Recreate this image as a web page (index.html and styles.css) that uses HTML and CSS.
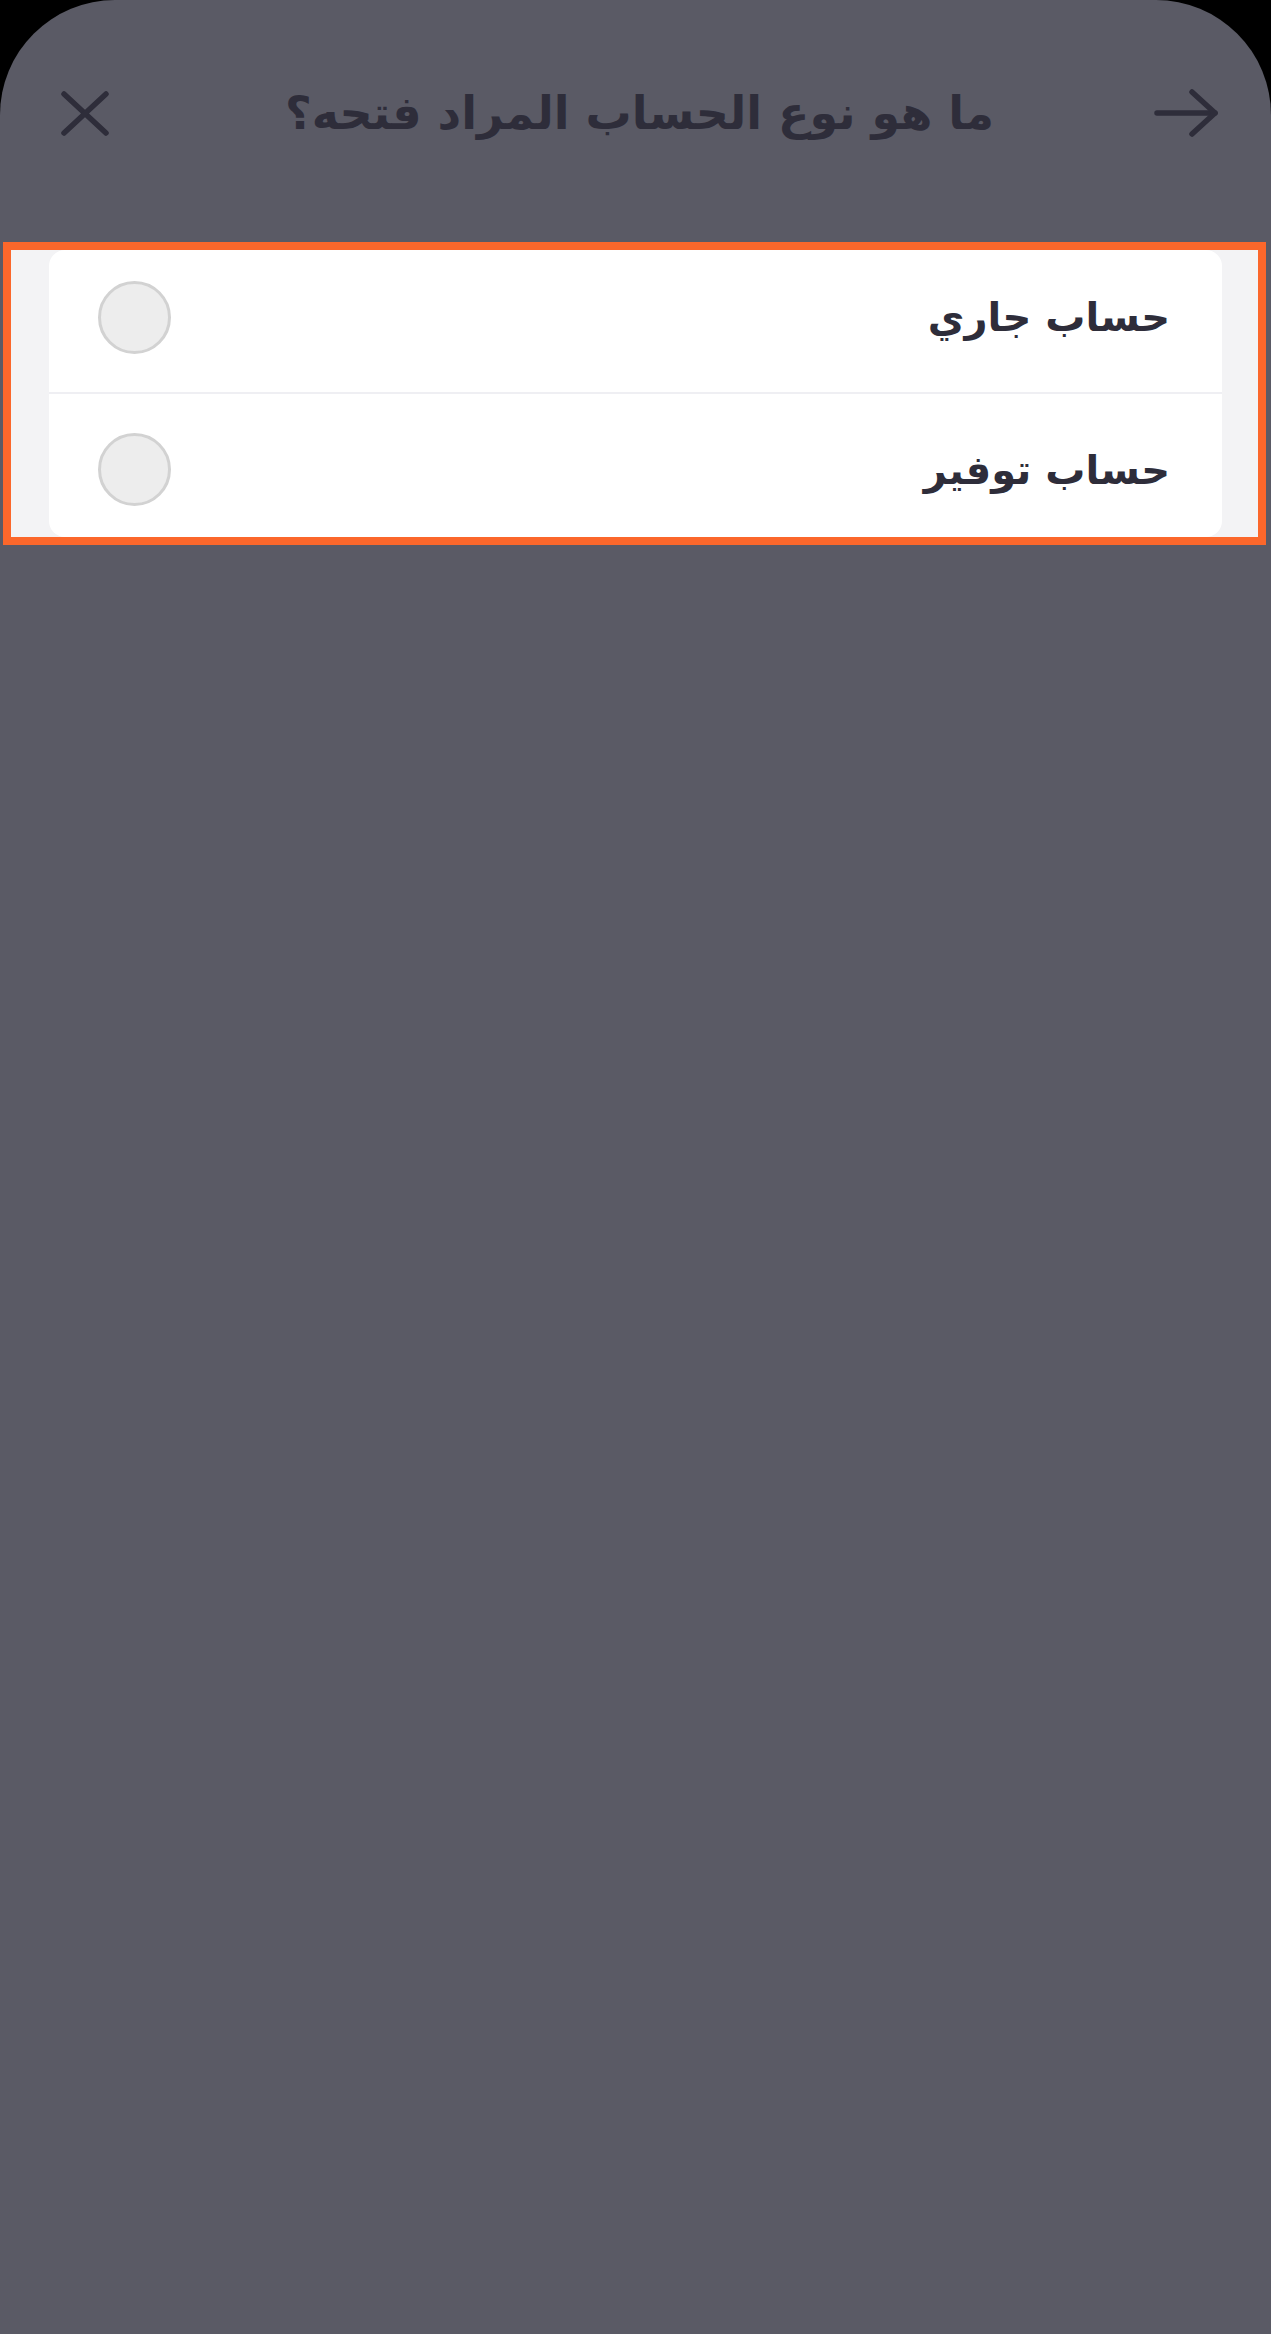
FILE: index.html
```html
<!DOCTYPE html>
<html lang="ar" dir="rtl">
<head>
<meta charset="utf-8">
<title>نوع الحساب</title>
<link rel="stylesheet" href="styles.css">
</head>
<body>
<div class="sheet">
  <header class="topbar">
    <button class="icon-btn back" aria-label="رجوع">
      <svg width="64" height="48" viewBox="0 0 64 48" fill="none" stroke="#2e2d3a" stroke-width="5.5" stroke-linecap="round" stroke-linejoin="round">
        <path d="M3 24 H61"/>
        <path d="M38 3 L61 24 L38 45"/>
      </svg>
    </button>
    <h1 class="title">ما هو نوع الحساب المراد فتحه؟</h1>
    <button class="icon-btn close" aria-label="إغلاق">
      <svg width="48" height="48" viewBox="0 0 48 48" fill="none" stroke="#2e2d3a" stroke-width="5.5" stroke-linecap="round">
        <path d="M3 5 L45 44"/>
        <path d="M45 5 L3 44"/>
      </svg>
    </button>
  </header>

  <section class="highlight">
    <div class="card">
      <label class="row row-first">
        <span class="label">حساب جاري</span>
        <span class="radio"></span>
      </label>
      <label class="row row-last">
        <span class="label">حساب توفير</span>
        <span class="radio"></span>
      </label>
    </div>
  </section>
</div>
</body>
</html>
```

FILE: styles.css
```css
html, body {
  margin: 0;
  padding: 0;
}

body {
  background: #000;
  font-family: "DejaVu Sans", sans-serif;
}

.sheet {
  background: #5a5a65;
  min-height: 2334px;
  border-radius: 115px 115px 0 0;
  overflow: hidden;
}

.topbar {
  height: 226px;
  display: grid;
  grid-template-columns: 1fr auto 1fr;
  align-items: center;
  padding: 0 53px 0 61px;
  margin-bottom: 16px;
}

.icon-btn {
  background: none;
  border: 0;
  padding: 0;
  display: flex;
}

.back {
  justify-self: start;
}

.close {
  justify-self: end;
}

.title {
  margin: 0;
  font-size: 46px;
  font-weight: bold;
  color: #2e2d3a;
  white-space: nowrap;
}

.highlight {
  margin: 0 5px 0 3px;
  border: 8px solid #fb672b;
  background: #f3f3f5;
  padding: 0 36px 0 38px;
}

.card {
  background: #fff;
  border-radius: 16px;
}

.row {
  display: flex;
  align-items: center;
  justify-content: space-between;
  padding: 0 52px 0 49px;
  box-sizing: border-box;
}

.row-first {
  height: 144px;
  padding-bottom: 8px;
  border-bottom: 2px solid #efeff3;
}

.row-last {
  height: 143px;
  padding-top: 8px;
}

.label {
  font-size: 40px;
  font-weight: bold;
  color: #2e2d3a;
}

.radio {
  width: 73px;
  height: 73px;
  box-sizing: border-box;
  border-radius: 50%;
  background: #ededed;
  border: 3px solid #d2d2d2;
}
```
